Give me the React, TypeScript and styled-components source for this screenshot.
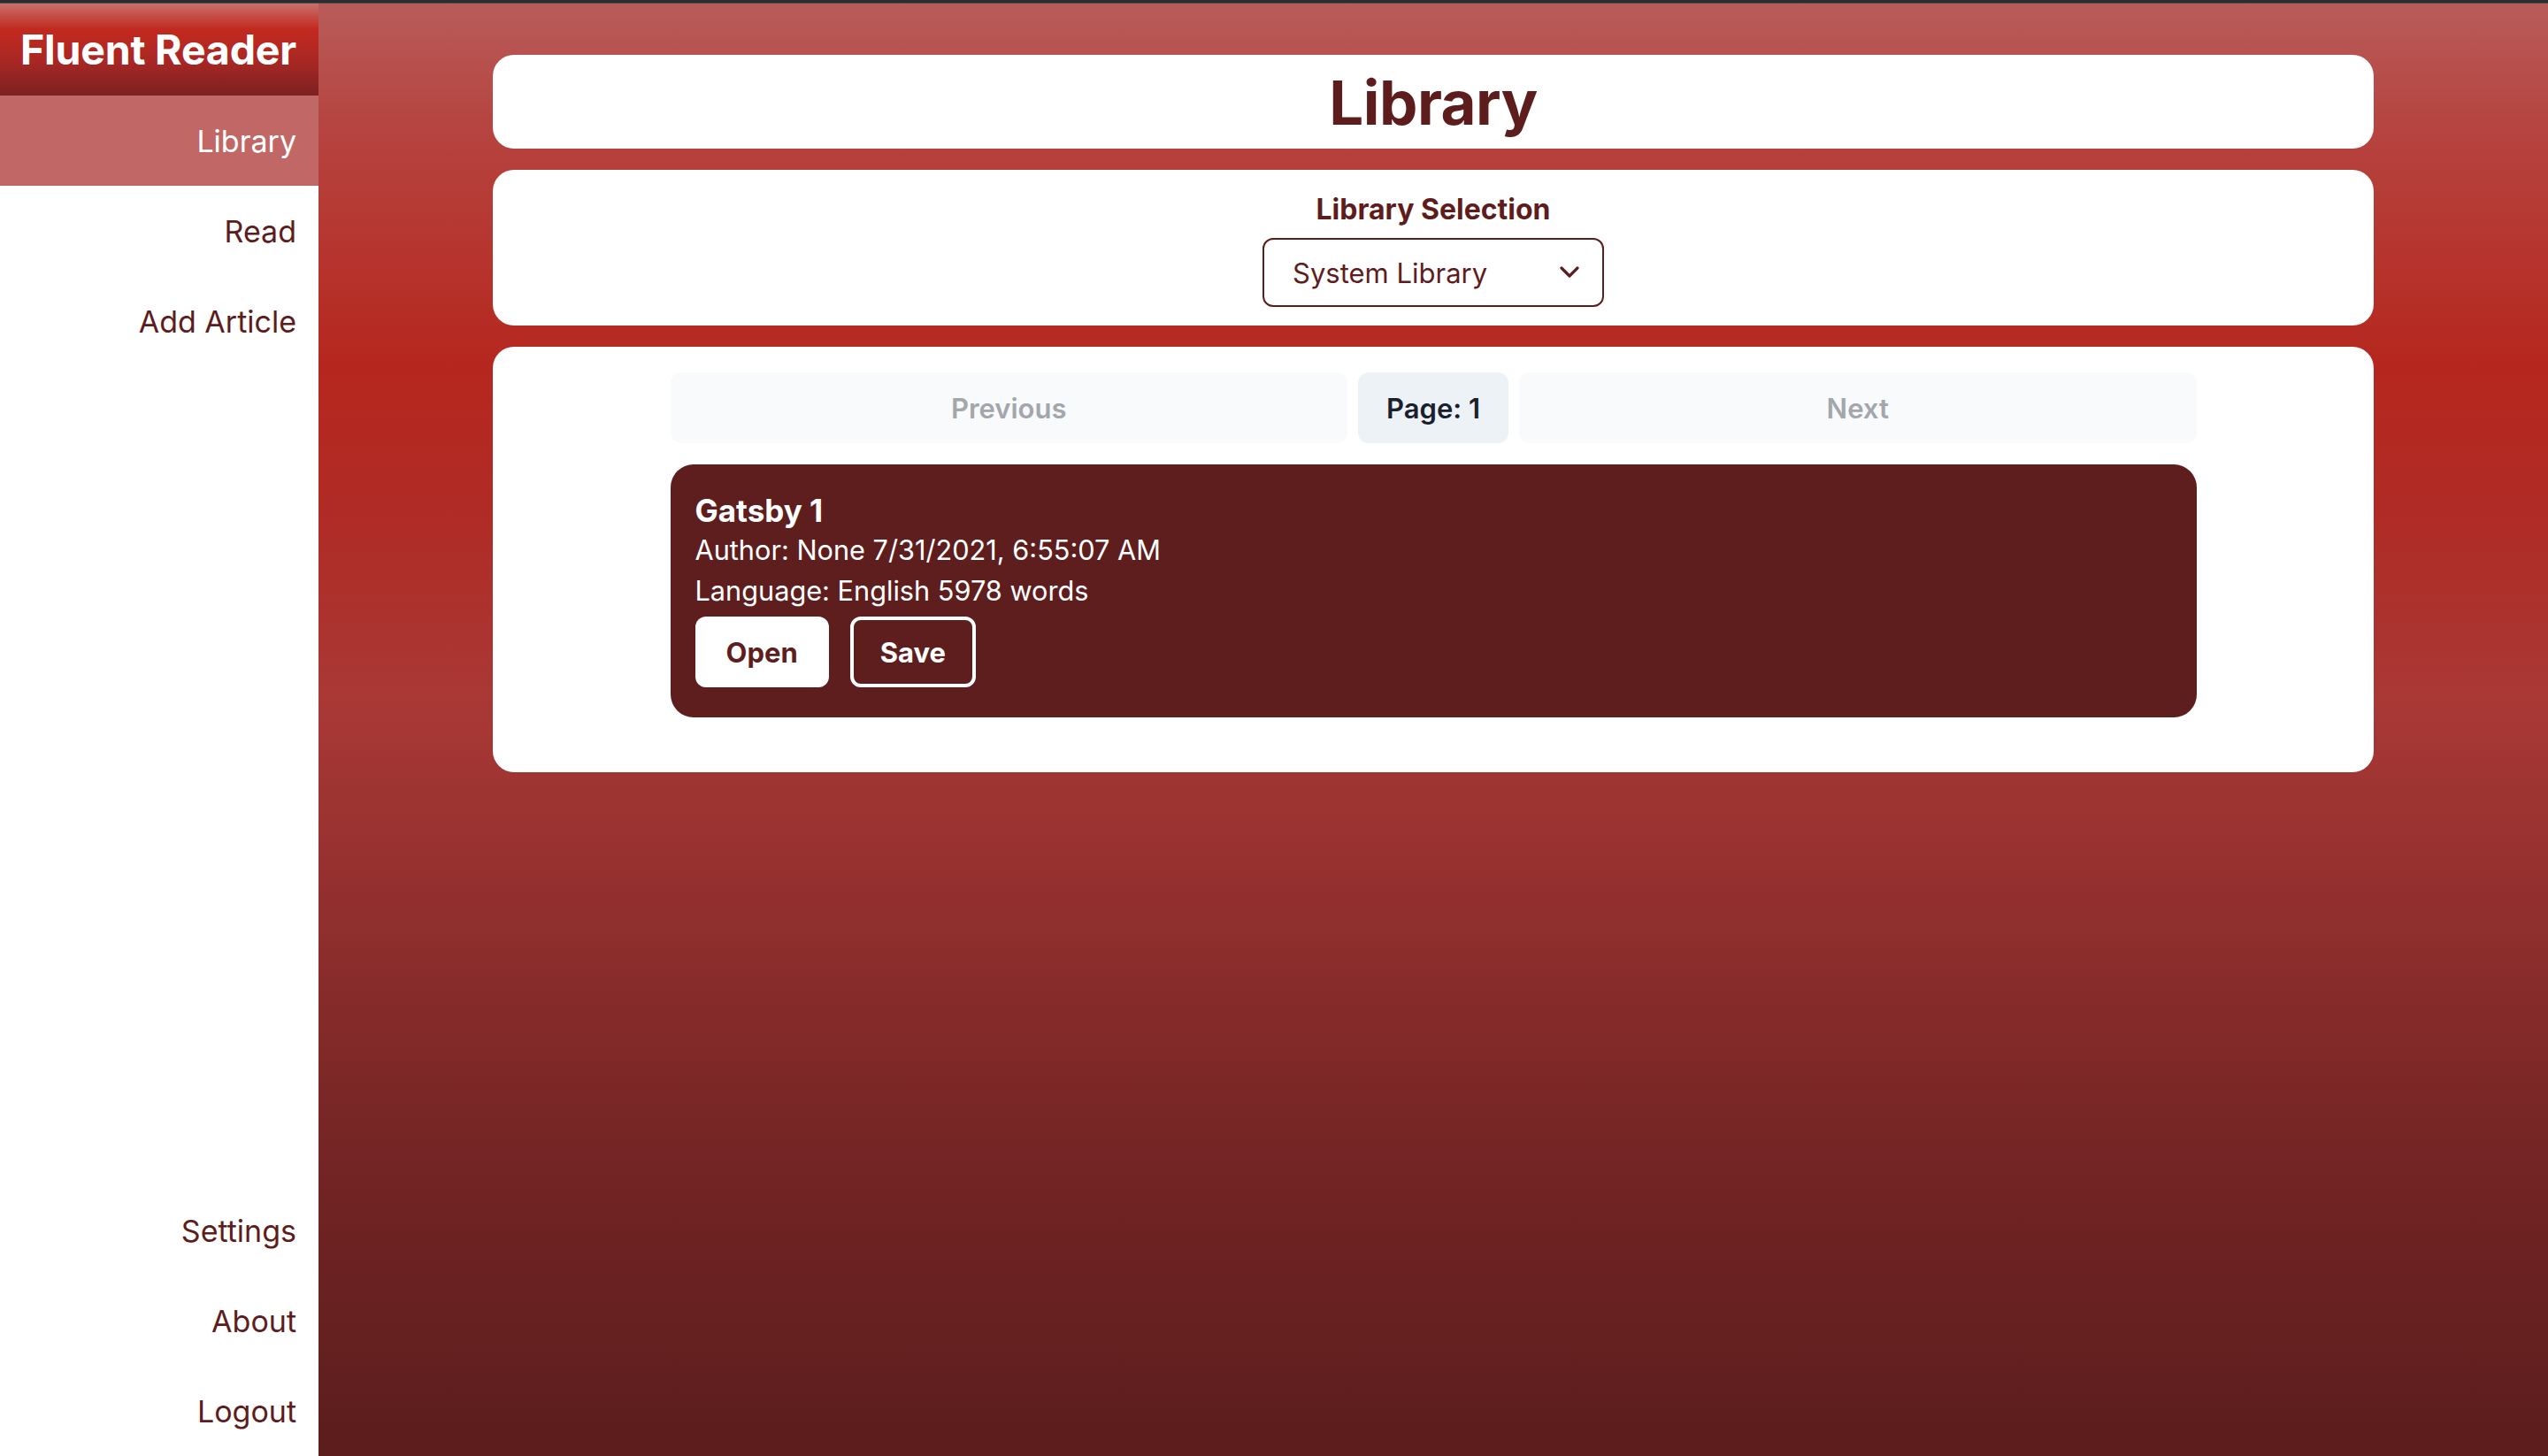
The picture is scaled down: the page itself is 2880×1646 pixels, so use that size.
import React from "react";
import styled, { createGlobalStyle } from "styled-components";

const Global = createGlobalStyle`
  html, body { margin: 0; padding: 0; }
  body {
    font-family: Inter, "Noto Sans", "Liberation Sans", sans-serif;
    -webkit-font-smoothing: antialiased;
  }
  * { box-sizing: border-box; }
`;

const DARK = "#5e1d1d";

const Page = styled.div`
  display: flex;
  flex-direction: column;
  height: 100vh;
  overflow: hidden;
`;

const WindowBar = styled.div`
  height: 4px;
  flex: none;
  background: #2d2d2f;
  border-bottom: 1px solid #4a4a4c;
`;

const Shell = styled.div`
  flex: 1;
  display: flex;
  min-height: 0;
`;

const Sidebar = styled.nav`
  width: 360px;
  flex: none;
  background: #ffffff;
  display: flex;
  flex-direction: column;
`;

const Brand = styled.div`
  height: 104px;
  display: flex;
  align-items: center;
  justify-content: flex-end;
  padding-right: 25px;
  color: #ffffff;
  font-weight: 700;
  font-size: 46.5px;
  letter-spacing: -0.2px;
  background: linear-gradient(180deg, #c8706c 0%, #c2291f 28%, #a92724 62%, #7c2121 100%);
`;

const NavItem = styled.a<{ $active?: boolean }>`
  height: 102px;
  display: flex;
  align-items: center;
  justify-content: flex-end;
  padding-right: 25px;
  font-size: 34px;
  font-weight: 400;
  color: ${(p) => (p.$active ? "#ffffff" : DARK)};
  background: ${(p) => (p.$active ? "#c16765" : "transparent")};
  text-decoration: none;
  cursor: pointer;
`;

const Spacer = styled.div`
  flex: 1;
`;

const Main = styled.main`
  flex: 1;
  display: flex;
  flex-direction: column;
  align-items: center;
  gap: 24px;
  padding-top: 58px;
  background: linear-gradient(
    180deg,
    #b85c59 0%,
    #b64541 8%,
    #b5271e 25%,
    #b02b25 35%,
    #a93835 48%,
    #8e2e2d 64%,
    #732424 80%,
    #5c1d1d 100%
  );
`;

const Card = styled.section<{ $pad: string }>`
  width: 2126px;
  background: #ffffff;
  border-radius: 24px;
  padding: ${(p) => p.$pad};
  display: flex;
  flex-direction: column;
  align-items: center;
`;

const Title = styled.h1`
  margin: 0;
  font-size: 69px;
  line-height: 83px;
  font-weight: 700;
  color: ${DARK};
  letter-spacing: -0.5px;
`;

const Label = styled.label`
  font-size: 32px;
  line-height: 45px;
  font-weight: 700;
  color: ${DARK};
`;

const SelectBox = styled.div`
  margin-top: 10px;
  width: 386px;
  height: 78px;
  border: 2px solid ${DARK};
  border-radius: 12px;
  display: flex;
  align-items: center;
  justify-content: space-between;
  padding: 0 26px 0 32px;
  color: ${DARK};
  font-size: 31px;
`;

const Inner = styled.div`
  width: 1725px;
  display: flex;
  flex-direction: column;
  gap: 24px;
`;

const Pager = styled.div`
  display: flex;
  gap: 12px;
`;

const PageButton = styled.button<{ $current?: boolean }>`
  flex: ${(p) => (p.$current ? "none" : "1")};
  height: 80px;
  border: none;
  border-radius: 12px;
  padding: 0 32px;
  font-family: inherit;
  font-size: 31px;
  font-weight: 600;
  background: ${(p) => (p.$current ? "#edf2f7" : "#f8fafc")};
  color: ${(p) => (p.$current ? "#1a202c" : "#a3a6ab")};
`;

const Article = styled.article`
  background: #5e1e1e;
  border-radius: 26px;
  padding: 30px 28px 34px;
  color: #ffffff;
  display: flex;
  flex-direction: column;
`;

const ArticleTitle = styled.h2`
  margin: 0;
  font-size: 35px;
  line-height: 44px;
  font-weight: 700;
`;

const Meta = styled.p`
  margin: 0;
  font-size: 30.7px;
  line-height: 46px;
  font-weight: 400;
`;

const Actions = styled.div`
  margin-top: 6px;
  display: flex;
  gap: 24px;
`;

const ActionButton = styled.button<{ $outline?: boolean }>`
  height: 80px;
  padding: 0 ${(p) => (p.$outline ? "30px" : "35px")};
  border-radius: 12px;
  font-family: inherit;
  font-size: 31px;
  font-weight: 700;
  border: ${(p) => (p.$outline ? "4px solid #ffffff" : "none")};
  background: ${(p) => (p.$outline ? "transparent" : "#ffffff")};
  color: ${(p) => (p.$outline ? "#ffffff" : "#5e1e1e")};
`;

const Chevron = () => (
  <svg width="22" height="14" viewBox="0 0 22 14" fill="none">
    <polyline points="2,2 11,11 20,2" stroke={DARK} strokeWidth="3.2" strokeLinecap="round" strokeLinejoin="round" />
  </svg>
);

export default function App() {
  return (
    <Page>
      <Global />
      <WindowBar />
      <Shell>
        <Sidebar>
          <Brand>Fluent Reader</Brand>
          <NavItem $active>Library</NavItem>
          <NavItem>Read</NavItem>
          <NavItem>Add Article</NavItem>
          <Spacer />
          <NavItem>Settings</NavItem>
          <NavItem>About</NavItem>
          <NavItem>Logout</NavItem>
        </Sidebar>
        <Main>
          <Card $pad="13px 0 10px">
            <Title>Library</Title>
          </Card>
          <Card $pad="22px 0 21px">
            <Label>Library Selection</Label>
            <SelectBox>
              <span>System Library</span>
              <Chevron />
            </SelectBox>
          </Card>
          <Card $pad="29px 0 62px">
            <Inner>
              <Pager>
                <PageButton>Previous</PageButton>
                <PageButton $current>Page: 1</PageButton>
                <PageButton>Next</PageButton>
              </Pager>
              <Article>
                <ArticleTitle>Gatsby 1</ArticleTitle>
                <Meta>Author: None 7/31/2021, 6:55:07 AM</Meta>
                <Meta>Language: English 5978 words</Meta>
                <Actions>
                  <ActionButton>Open</ActionButton>
                  <ActionButton $outline>Save</ActionButton>
                </Actions>
              </Article>
            </Inner>
          </Card>
        </Main>
      </Shell>
    </Page>
  );
}
